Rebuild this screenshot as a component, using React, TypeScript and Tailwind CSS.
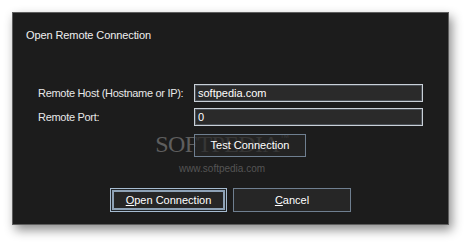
import React from "react";

const font = { fontFamily: '"Liberation Sans", Arial, sans-serif' };

function Field({ label, value }: { label: string; value: string }) {
  return (
    <div className="flex items-center h-[18px]">
      <span className="w-[156px] text-[11px] tracking-[-0.3px] text-[#e8e8e8]">{label}</span>
      <div className="w-[229px] h-[18px] border border-[#c9d0d8] bg-[#2a2a2a] shadow-[inset_0_0_0_1px_#4a4f55] flex items-center px-[3px] text-[11px] text-white">
        {value}
      </div>
    </div>
  );
}

export default function App() {
  return (
    <div className="w-[469px] h-[246px] bg-white pt-[12px] pl-[12px]" style={font}>
      <div className="relative w-[437px] h-[213px] bg-[#1c1c1c] border border-[#5e5e5e] shadow-[3px_5px_10px_rgba(0,0,0,0.45)] flex flex-col">
        <div className="pl-[13px] pt-[16px] text-[11px] leading-[13px] tracking-[-0.1px] text-[#f0f0f0]">
          Open Remote Connection
        </div>

        <div className="pl-[25px] pt-[42px] flex flex-col gap-[6px]">
          <Field label="Remote Host (Hostname or IP):" value="softpedia.com" />
          <Field label="Remote Port:" value="0" />
          <div className="pl-[156px]">
            <button className="w-[112px] h-[23px] border border-[#6f7f90] bg-[#262626]/70 text-[11px] text-white relative z-10">
              Test Connection
            </button>
          </div>
        </div>

        <div className="mt-[31px] flex justify-start gap-[6px] pl-[97px]">
          <button className="w-[117px] h-[24px] border border-[#a6bbd0] bg-[#262626] shadow-[inset_0_0_0_1px_#202428,inset_0_0_0_3px_#8ea2b6] text-[11px] text-white">
            <span className="underline">O</span>pen Connection
          </button>
          <button className="w-[118px] h-[24px] border border-[#6f7f90] bg-[#262626] text-[11px] text-white">
            <span className="underline">C</span>ancel
          </button>
        </div>

        <div className="absolute left-[139px] top-[119px] w-[140px] pointer-events-none flex flex-col items-center">
          <div className="flex items-start">
            <span
              className="text-[24px] leading-[24px] tracking-[-0.6px] text-[#5e5e5e]"
              style={{ fontFamily: '"Liberation Serif", "Times New Roman", serif' }}
            >
              SOFTPEDIA
            </span>
            <span className="text-[6px] leading-[8px] text-[#6a6a6a] ml-[1px]">TM</span>
          </div>
          <span className="text-[10px] leading-[12px] mt-[7px] text-[#555555]">
            www.softpedia.com
          </span>
        </div>
      </div>
    </div>
  );
}
